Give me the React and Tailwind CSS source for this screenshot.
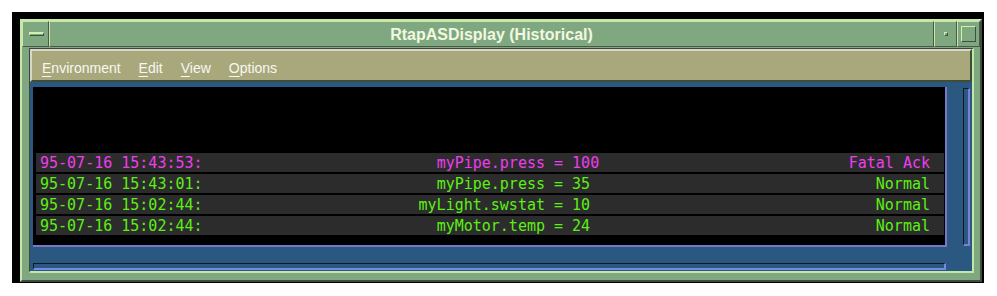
import React from 'react';

const rows = [
  { time: '95-07-16 15:43:53:', name: 'myPipe.press', value: '100', status: 'Fatal Ack', alarm: true },
  { time: '95-07-16 15:43:01:', name: 'myPipe.press', value: '35', status: 'Normal' },
  { time: '95-07-16 15:02:44:', name: 'myLight.swstat', value: '10', status: 'Normal' },
  { time: '95-07-16 15:02:44:', name: 'myMotor.temp', value: '24', status: 'Normal' },
];

const menus = ['Environment', 'Edit', 'View', 'Options'];

function MenuItem({ label }) {
  return (
    <span>
      <span className="underline underline-offset-[3px] decoration-1">{label[0]}</span>
      {label.slice(1)}
    </span>
  );
}

export default function App() {
  return (
    <div className="w-[997px] h-[296px] bg-white pt-[12px] pl-[12px]">
      <div className="w-[972px] h-[271px] bg-black pt-[7px] pl-[8px]">
        {/* window frame */}
        <div className="w-[962px] h-[263px] bg-[#80a880] border-2 border-t-[#c8e8a8] border-l-[#c8e8a8] border-b-[#404c40] border-r-[#404c40] flex flex-col">
          {/* title bar */}
          <div className="h-[26px] flex">
            <div className="w-[27px] border border-t-[#c8e8a8] border-l-[#c8e8a8] border-b-[#4c584c] border-r-[#4c584c] flex items-center pl-[6px]">
              <div className="w-[15px] h-[4px] border-t-2 border-t-[#d0f0b0] border-b border-b-[#405040] border-l border-l-[#d0f0b0] border-r border-r-[#405040]" />
            </div>
            <div className="flex-1 border border-t-[#c8e8a8] border-l-[#c8e8a8] border-b-[#4c584c] border-r-[#4c584c] flex justify-center items-start pt-[4px] leading-[18px] text-[16px] font-bold text-[#f0f8e0] font-['Liberation_Sans',sans-serif]">
              RtapASDisplay (Historical)
            </div>
            <div className="w-[23px] border border-t-[#c8e8a8] border-l-[#c8e8a8] border-b-[#4c584c] border-r-[#4c584c] flex items-center justify-center">
              <div className="w-[4px] h-[4px] border border-t-[#d0f0b0] border-l-[#d0f0b0] border-b-[#405040] border-r-[#405040]" />
            </div>
            <div className="w-[23px] border border-t-[#c8e8a8] border-l-[#c8e8a8] border-b-[#4c584c] border-r-[#4c584c] flex items-center justify-center">
              <div className="w-[15px] h-[16px] border border-t-[#d0f0b0] border-l-[#d0f0b0] border-b-[#405040] border-r-[#405040]" />
            </div>
          </div>

          {/* client area */}
          <div className="mt-[1px] ml-[7px] mr-[6px] h-[225px] flex flex-col border-t border-l border-t-[#3c483c] border-l-[#3c483c] border-b-2 border-r-2 border-b-[#c0e8a8] border-r-[#c0e8a8]">
            <div className="h-[33px] bg-[#a8a87c] border-2 border-t-[#d8d8c8] border-l-[#d8d8c8] border-b-[#404c38] border-r-[#404c38] flex gap-[18px] pl-[10px] pt-[10px] leading-[14px] text-[14px] text-[#f8f8f0] font-['Liberation_Sans',sans-serif]">
              {menus.map((m) => (
                <MenuItem key={m} label={m} />
              ))}
            </div>

            <div className="flex-1 bg-[#2a5880] flex flex-col pl-[3px]">
              <div className="flex mt-[5px]">
                <div className="w-[914px] h-[160px] bg-black border-r-2 border-b-2 border-r-[#7878c8] border-b-[#7878c8] pt-[66px] pl-[3px] pr-[1px] flex flex-col gap-[2px] font-['DejaVu_Sans_Mono',monospace] text-[15px] leading-[19px]">
                  {rows.map((r, i) => (
                    <div
                      key={i}
                      className={`h-[19px] bg-[#2c2c2c] flex pl-[4px] pr-[14px] pt-[1px] leading-[18px] whitespace-pre ${
                        r.alarm ? 'text-[#f03cf0]' : 'text-[#5cf014]'
                      }`}
                    >
                      <span className="w-[300px]">{r.time}</span>
                      <span className="w-[205px] text-right">{r.name}</span>
                      <span>{' = ' + r.value}</span>
                      <span className="flex-1 text-right">{r.status}</span>
                    </div>
                  ))}
                </div>
                <div className="ml-[16px] mt-[1px] w-[7px] h-[158px] border-t border-l border-t-[#101828] border-l-[#101828] border-r-2 border-b-2 border-r-[#7880d8] border-b-[#7880d8]" />
              </div>
              <div className="mt-[16px] w-[913px] h-[7px] border-t border-l border-t-[#101828] border-l-[#101828] border-b-2 border-r-2 border-b-[#7888e8] border-r-[#7888e8]" />
            </div>
          </div>
        </div>
      </div>
    </div>
  );
}
